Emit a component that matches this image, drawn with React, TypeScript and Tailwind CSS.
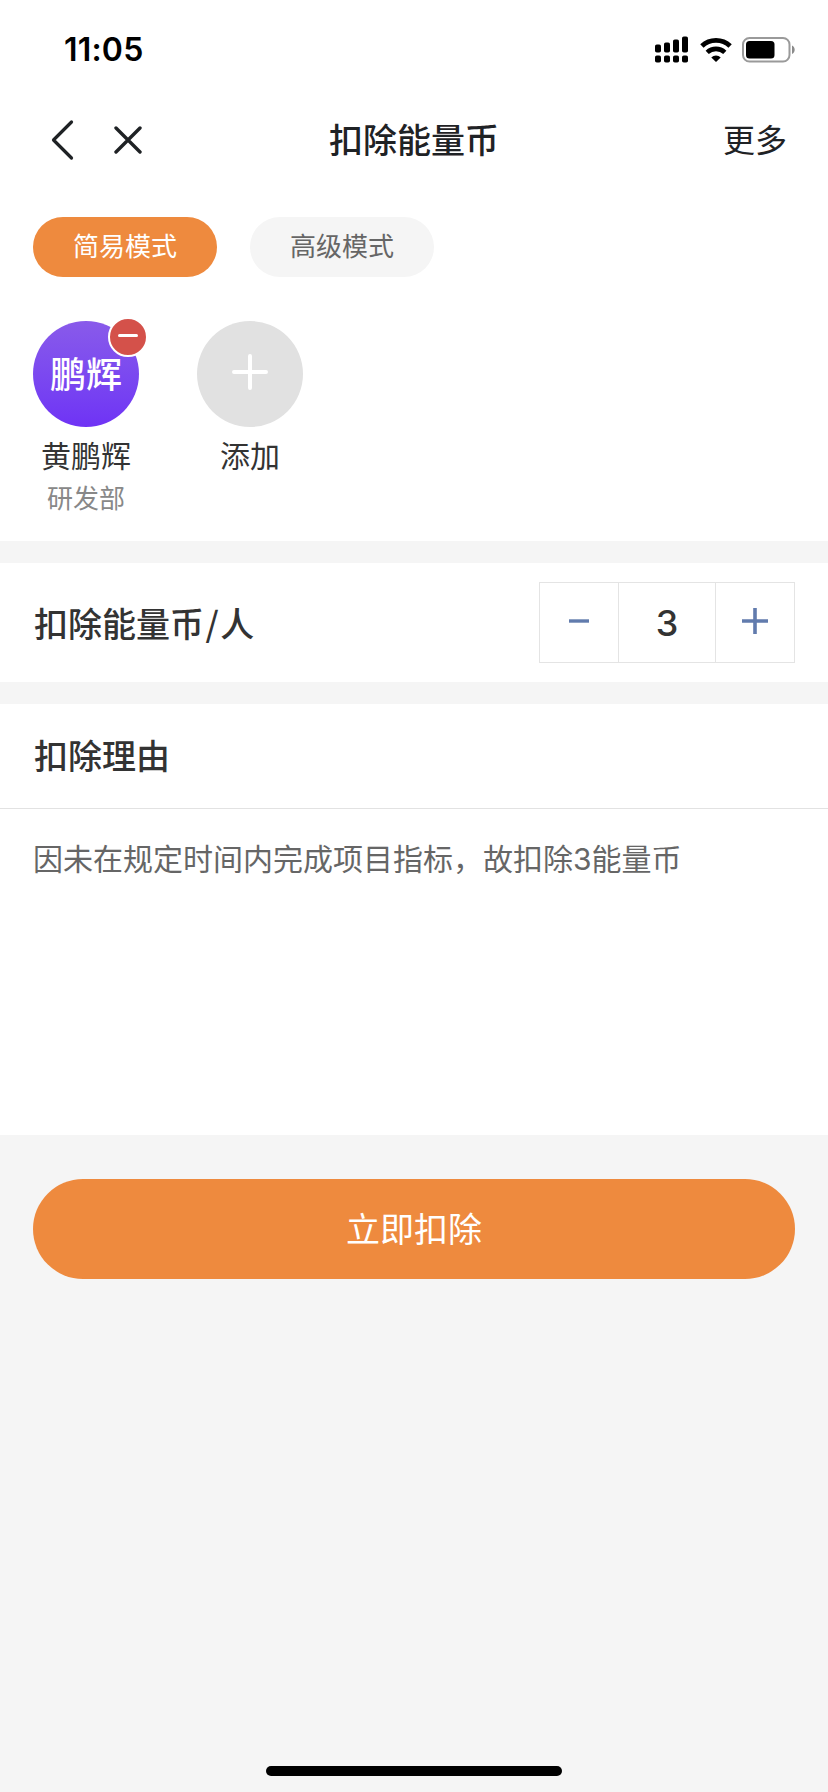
import React, { useState } from 'react';

const SignalIcon = () => (
  <svg width="34" height="27" viewBox="0 0 34 27" fill="#000">
    <rect x="0" y="8.5" width="6" height="8" rx="1.8" />
    <rect x="9" y="6.5" width="6" height="10" rx="1.8" />
    <rect x="18" y="3.5" width="6" height="13" rx="1.8" />
    <rect x="27" y="0.5" width="6" height="16" rx="1.8" />
    <rect x="0" y="19.5" width="6" height="7" rx="1.8" />
    <rect x="9" y="19.5" width="6" height="7" rx="1.8" />
    <rect x="18" y="19.5" width="6" height="7" rx="1.8" />
    <rect x="27" y="19.5" width="6" height="7" rx="1.8" />
  </svg>
);

const WifiIcon = () => (
  <svg width="32" height="24" viewBox="0 0 32 24" fill="none" stroke="#000">
    <path d="M1.9 8.1a20.3 20.3 0 0 1 28.2 0" strokeWidth="4.8" />
    <path d="M7.2 14.4a12.7 12.7 0 0 1 17.6 0" strokeWidth="4.6" />
    <path d="M16 24l-4.700-4.600a6.800 6.800 0 0 1 9.400 0z" fill="#000" stroke="none" />
  </svg>
);

const BatteryIcon = () => (
  <svg width="54" height="26" viewBox="0 0 54 26">
    <rect x="1" y="1" width="46.5" height="23.5" rx="6.5" fill="none" stroke="#9a9a9a" strokeWidth="2" />
    <rect x="4" y="4" width="28.5" height="17.5" rx="3.5" fill="#000" />
    <path d="M50 8.5c3.6 1.6 3.6 7 0 8.6z" fill="#8a8a8a" />
  </svg>
);

const StatusBar = () => (
  <div className="flex h-[99px] items-center justify-between pr-[32px] pl-[64px]">
    <span className="font-[Inter,sans-serif] text-[32px] leading-none font-semibold tracking-[0.2px] text-black">
      11:05
    </span>
    <div className="flex items-center">
      <SignalIcon />
      <div className="ml-[11px]">
        <WifiIcon />
      </div>
      <div className="ml-[10px]">
        <BatteryIcon />
      </div>
    </div>
  </div>
);

const NavBar = () => (
  <header className="grid h-[82px] grid-cols-[1fr_auto_1fr] items-center pr-[41px] pl-[41px] text-[#1f2225]">
    <div className="flex items-center gap-[40px] pl-[9px]">
      <button aria-label="返回">
        <svg width="24" height="42" viewBox="0 0 24 42" fill="none" stroke="currentColor" strokeWidth="3.2" strokeLinecap="round" strokeLinejoin="round">
          <path d="M21.5 3L3.5 21l18 18" />
        </svg>
      </button>
      <button aria-label="关闭">
        <svg width="28" height="28" viewBox="0 0 28 28" fill="none" stroke="currentColor" strokeWidth="3.4" strokeLinecap="round">
          <path d="M2 2l24 24M26 2L2 26" />
        </svg>
      </button>
    </div>
    <h1 className="pb-[3px] text-[34px] leading-none font-medium">扣除能量币</h1>
    <button className="justify-self-end pb-[5px] text-[32px] leading-none">更多</button>
  </header>
);

interface StepperProps {
  value: number;
  onChange: (value: number) => void;
}

const Stepper: React.FC<StepperProps> = ({ value, onChange }) => (
  <div className="flex h-[81px] w-[256px] border border-[#e4e4e4]">
    <button
      aria-label="减少"
      onClick={() => onChange(Math.max(1, value - 1))}
      className="flex w-[78px] items-center justify-center"
    >
      <svg width="26" height="26" viewBox="0 0 26 26" className="mb-[3px]" fill="none" stroke="#617bad" strokeWidth="3.4">
        <path d="M3 13h20" />
      </svg>
    </button>
    <div className="flex w-[98px] items-center justify-center border-x border-[#e4e4e4] font-[Inter,sans-serif] text-[36px] leading-none font-medium text-[#333]">
      {value}
    </div>
    <button
      aria-label="增加"
      onClick={() => onChange(value + 1)}
      className="flex flex-1 items-center justify-center"
    >
      <svg width="26" height="26" viewBox="0 0 26 26" className="mb-[3px]" fill="none" stroke="#617bad" strokeWidth="3.6">
        <path d="M0 13h26M13 0v26" />
      </svg>
    </button>
  </div>
);

const modes = ['简易模式', '高级模式'];

const App: React.FC = () => {
  const [mode, setMode] = useState(0);
  const [count, setCount] = useState(3);

  return (
    <div className="flex h-[1792px] w-[828px] flex-col bg-[#f5f5f5] font-['Noto_Sans_CJK_SC',sans-serif] text-[#333]">
      <div className="bg-white">
        <StatusBar />
        <NavBar />

        <div className="flex gap-[33px] px-[33px] pt-[36px]">
          {modes.map((label, index) => (
            <button
              key={label}
              onClick={() => setMode(index)}
              className={`h-[60px] w-[184px] rounded-full pb-[4px] text-[26px] leading-none ${
                mode === index ? 'bg-[#ee8a3e] text-white' : 'bg-[#f5f5f5] text-[#666]'
              }`}
            >
              {label}
            </button>
          ))}
        </div>

        <div className="flex h-[264px] gap-[58px] px-[33px] pt-[44px]">
          <div className="flex w-[106px] flex-col items-center">
            <div className="relative flex size-[106px] items-center justify-center rounded-full bg-linear-to-b from-[#895aea] to-[#6f32f5] pb-[4px] text-[36px] leading-none font-medium text-white">
              鹏辉
              <button
                aria-label="移除"
                className="absolute -top-[4px] -right-[9px] flex size-[40px] items-center justify-center rounded-full border-2 border-white bg-[#d4514a]"
              >
                <span className="mb-[3px] h-[3px] w-[20px] rounded-full bg-white" />
              </button>
            </div>
            <p className="mt-[7px] text-[30px] leading-[40px] whitespace-nowrap">黄鹏辉</p>
            <p className="mt-[5px] text-[26px] leading-[36px] text-[#888]">研发部</p>
          </div>
          <div className="flex w-[106px] flex-col items-center">
            <button aria-label="添加成员" className="flex size-[106px] items-center justify-center rounded-full bg-[#e1e1e1]">
              <svg width="36" height="36" viewBox="0 0 36 36" className="mb-[5px]" fill="none" stroke="#fff" strokeWidth="4" strokeLinecap="round">
                <path d="M2 18h32M18 2v32" />
              </svg>
            </button>
            <p className="mt-[7px] text-[30px] leading-[40px]">添加</p>
          </div>
        </div>
      </div>

      <div className="mt-[22px] flex h-[119px] items-center justify-between bg-white pr-[33px] pl-[34px]">
        <h2 className="mt-[1px] text-[34px] leading-none font-medium">
          扣除能量币<span className="mx-[1.5px]">/</span>人
        </h2>
        <Stepper value={count} onChange={setCount} />
      </div>

      <div className="mt-[22px] h-[431px] bg-white">
        <div className="flex h-[105px] items-center border-b border-[#e2e2e2] pr-[33px] pb-[2px] pl-[34px]">
          <h2 className="text-[34px] leading-none font-medium">扣除理由</h2>
        </div>
        <p className="px-[33px] pt-[27px] text-[30px] leading-[42px] text-[#666]">
          因未在规定时间内完成项目指标，故扣除<span className="font-[Inter,sans-serif]">{count}</span>能量币
        </p>
      </div>

      <div className="px-[33px] pt-[44px]">
        <button className="h-[100px] w-full rounded-full bg-[#ee8a3e] pb-[3px] text-[34px] leading-none text-white">
          立即扣除
        </button>
      </div>

      <div className="mx-auto mt-auto mb-[16px] h-[10px] w-[296px] rounded-full bg-black" />
    </div>
  );
};

export default App;
